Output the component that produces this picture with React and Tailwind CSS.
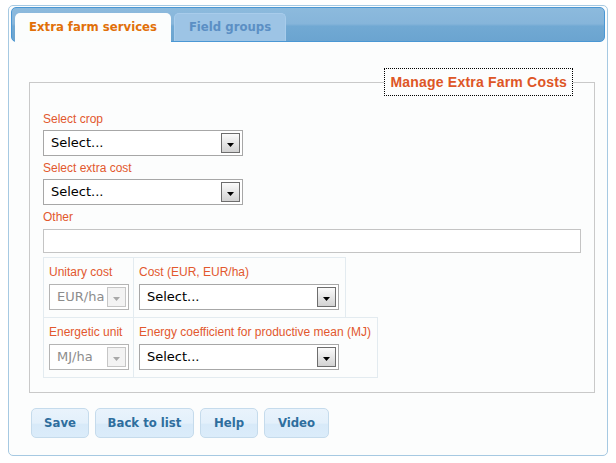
import React from 'react'

const labelCls = "block text-[12px] leading-[16px] text-[#e2582e] font-['Liberation_Sans',Arial,sans-serif]"

const Arrow = ({ disabled }) => (
  <svg width="7" height="4" viewBox="0 0 7 4" className="mt-[3px]">
    <polygon points="0,0 7,0 3.5,4" fill={disabled ? '#a8a8a8' : '#000'} />
  </svg>
)

const Select = ({ text, width = 'w-[200px]', disabled }) => (
  <div
    className={`${width} h-[26px] flex items-center justify-between border ${
      disabled ? 'border-[#b4b4b4] text-[#8c8c8c]' : 'border-[#a7a7a7] text-black'
    } bg-white pl-[7px] pr-[2px] text-[13px] font-['DejaVu_Sans',sans-serif]`}
  >
    <span className="truncate">{text}</span>
    <div
      className={`w-[19px] h-[20px] flex items-center justify-center border ${
        disabled
          ? 'border-[#c6c6c6] bg-[#f3f3f3]'
          : 'border-[#6d6d6d] bg-[linear-gradient(to_bottom,#fbfbfb,#d2d2d2)]'
      }`}
    >
      <Arrow disabled={disabled} />
    </div>
  </div>
)

// one row of the cost table, each is its own bordered table
const CostRow = ({ unitLabel, unit, label, className = '' }) => (
  <div className={`flex w-fit border border-[#e3ebf0] ${className}`}>
    <div className="w-[90px] border-r border-[#e3ebf0] pl-[5px] pt-[6px] pb-[7px]">
      <span className={labelCls}>{unitLabel}</span>
      <div className="mt-[4px]">
        <Select text={unit} width="w-[80px]" disabled />
      </div>
    </div>
    <div className="pl-[5px] pr-[6px] pt-[6px] pb-[7px]">
      <span className={labelCls}>{label}</span>
      <div className="mt-[4px]">
        <Select text="Select..." />
      </div>
    </div>
  </div>
)

const buttons = [
  { label: 'Save', w: 'w-[58px]' },
  { label: 'Back to list', w: 'w-[99px]' },
  { label: 'Help', w: 'w-[58px]' },
  { label: 'Video', w: 'w-[65px]' },
]

export default function App() {
  return (
    <div className="w-[616px] h-[463px] bg-white pl-[8px] pt-[5px] font-['DejaVu_Sans_Condensed','DejaVu_Sans',sans-serif]">
      <div className="w-[600px] h-[451px] border border-[#a6c9e2] rounded-[5px] bg-[#fcfdfd] px-[2px] pt-[1px]">
        {/* Tab bar */}
        <div className="h-[35px] rounded-[5px] border border-[#4a97d4] bg-[linear-gradient(to_bottom,#8cbadd_0%,#86b5da_48%,#71a9d3_55%,#6ba4d0_100%)] pl-[3px] flex items-end gap-[3px]">
          <div className="w-[156px] h-[29px] -mb-px pb-[1px] rounded-t-[5px] bg-[#fbfdfd] flex items-center justify-center text-[13px] font-bold text-[#e17009]">
            Extra farm services
          </div>
          <div className="w-[112px] h-[28px] pb-[1px] rounded-t-[5px] bg-[#9dc4e5] border border-b-0 border-[#a8cceb] flex items-center justify-center text-[13px] font-bold text-[#5b8fc4]">
            Field groups
          </div>
        </div>

        {/* Panel */}
        <div className="pl-[18px] pt-[26px]">
          <fieldset className="w-[558px] border border-[#c9c9c9] px-[13px] pt-[15px] pb-[14px]">
            <legend className="ml-auto mr-[8px] border border-dotted border-black px-[5px] py-[5px] text-[14px] leading-[16px] tracking-[0.2px] font-bold text-[#de5626] font-['Liberation_Sans',Arial,sans-serif]">
              Manage Extra Farm Costs
            </legend>

            <label className={labelCls}>Select crop</label>
            <div className="mt-[3px]">
              <Select text="Select..." />
            </div>

            <label className={`${labelCls} mt-[4px]`}>Select extra cost</label>
            <div className="mt-[3px]">
              <Select text="Select..." />
            </div>

            <label className={`${labelCls} mt-[4px]`}>Other</label>
            <input
              type="text"
              className="mt-[4px] block w-[538px] h-[24px] border border-[#c4c4c4] bg-white"
            />

            <CostRow className="mt-[4px]" unitLabel="Unitary cost" unit="EUR/ha" label="Cost (EUR, EUR/ha)" />
            <CostRow
              className="-mt-px"
              unitLabel="Energetic unit"
              unit="MJ/ha"
              label="Energy coefficient for productive mean (MJ)"
            />
          </fieldset>

          <div className="flex gap-[6px] ml-[2px] mt-[15px]">
            {buttons.map((b) => (
              <button
                key={b.label}
                className={`${b.w} h-[30px] pb-[1px] rounded-[5px] border border-[#c5dbec] bg-[linear-gradient(to_bottom,#e9f3fc_0%,#e3f0fb_50%,#d8eaf9_55%,#dbecfa_100%)] text-[13px] font-bold text-[#2e6e9e]`}
              >
                {b.label}
              </button>
            ))}
          </div>
        </div>
      </div>
    </div>
  )
}
